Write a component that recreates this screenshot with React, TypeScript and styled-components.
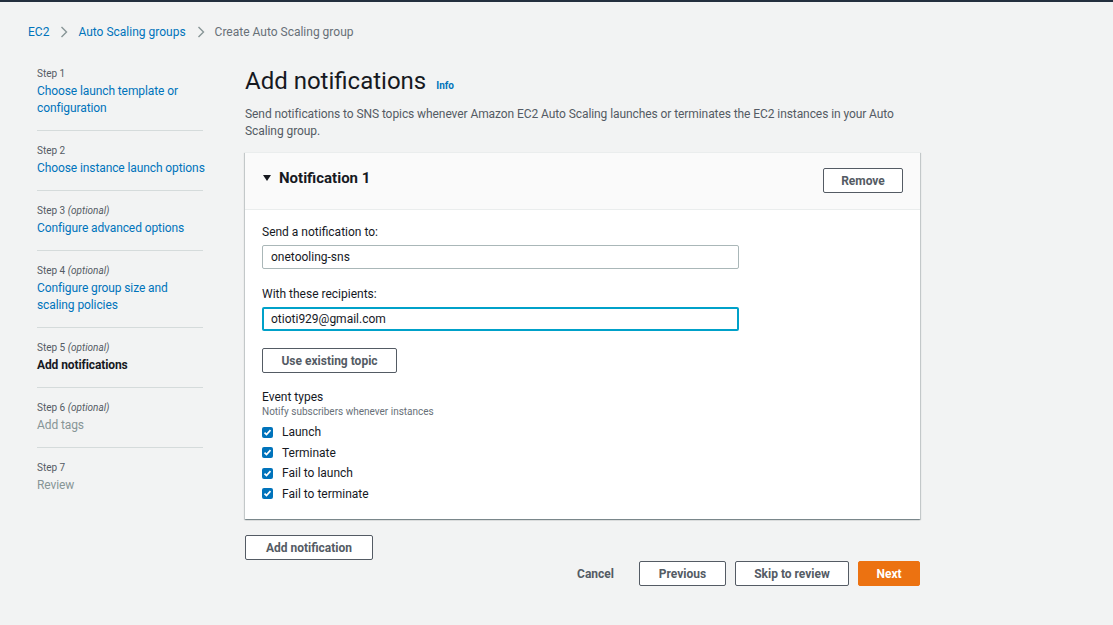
import React from "react";
import styled, { createGlobalStyle } from "styled-components";

const Global = createGlobalStyle`
  html, body { margin: 0; padding: 0; }
  body {
    background: #f2f3f3;
    font-family: Roboto, "Open Sans", sans-serif;
    color: #16191f;
  }
  * { box-sizing: border-box; }
`;

const Page = styled.div`
  border-top: 2px solid #232f3e;
  min-height: 625px;
  background: #f2f3f3;
`;

const Breadcrumbs = styled.nav`
  display: flex;
  align-items: center;
  height: 60px;
  padding: 0 0 0 28px;
  font-size: 12px;
`;

const Crumb = styled.span<{ $current?: boolean }>`
  color: ${(p) => (p.$current ? "#687078" : "#0073bb")};
`;

const Sep = styled.span`
  display: inline-flex;
  margin: 0 10px 0 11px;
  color: #879596;
`;

const Body = styled.div`
  display: flex;
  gap: 42px;
  padding-left: 37px;
`;

const Side = styled.aside`
  width: 166px;
  padding-top: 5px;
`;

const StepItem = styled.div<{ $last?: boolean }>`
  padding: 0 0 ${(p) => (p.$last ? "0" : "13px")};
  margin-bottom: 13px;
  border-bottom: ${(p) => (p.$last ? "none" : "1px solid #d5dbdb")};
`;

const StepLabel = styled.div`
  font-size: 10px;
  color: #545b64;
  line-height: 14px;
  margin-bottom: 2px;
  i { font-style: italic; }
`;

const StepTitle = styled.div<{ $state: "link" | "active" | "disabled" }>`
  font-size: 12px;
  line-height: 17px;
  white-space: nowrap;
  letter-spacing: -0.1px;
  color: ${(p) =>
    p.$state === "link" ? "#0073bb" : p.$state === "active" ? "#16191f" : "#879596"};
  font-weight: ${(p) => (p.$state === "active" ? 700 : 400)};
`;

const Main = styled.main`
  width: 675px;
  padding-top: 4px;
`;

const TitleRow = styled.div`
  display: flex;
  align-items: baseline;
  gap: 10px;
`;

const H1 = styled.h1`
  margin: 0;
  font-size: 24px;
  font-weight: 400;
  line-height: 30px;
  color: #16191f;
`;

const Info = styled.span`
  font-size: 10px;
  font-weight: 700;
  color: #0073bb;
`;

const Desc = styled.p`
  margin: 10px 0 12px;
  font-size: 12px;
  line-height: 17px;
  letter-spacing: -0.08px;
  color: #545b64;
`;

const Card = styled.section`
  background: #fff;
  border-top: 1px solid #eaeded;
  box-shadow: 0 1px 1px 0 rgba(0, 28, 36, 0.3), 1px 1px 1px 0 rgba(0, 28, 36, 0.15),
    -1px 1px 1px 0 rgba(0, 28, 36, 0.15);
`;

const CardHeader = styled.div`
  display: flex;
  justify-content: space-between;
  align-items: flex-start;
  background: #fafafa;
  border-bottom: 1px solid #eaeded;
  height: 57px;
  padding: 15px 17px 0 17px;
`;

const HeaderTitle = styled.h2`
  margin: 0;
  display: flex;
  align-items: center;
  gap: 8px;
  font-size: 15px;
  font-weight: 700;
  line-height: 18px;
  padding-top: 1px;
`;

const Caret = styled.span`
  width: 0;
  height: 0;
  border-left: 4.5px solid transparent;
  border-right: 4.5px solid transparent;
  border-top: 6px solid #16191f;
  margin-left: 1px;
`;

const Button = styled.button<{ $primary?: boolean; $w?: number }>`
  font-family: inherit;
  font-size: 12px;
  font-weight: 700;
  height: 25px;
  padding: 0 16px;
  border-radius: 2px;
  cursor: pointer;
  border: 1px solid ${(p) => (p.$primary ? "#ec7211" : "#545b64")};
  background: ${(p) => (p.$primary ? "#ec7211" : "#fff")};
  color: ${(p) => (p.$primary ? "#fff" : "#545b64")};
  width: ${(p) => (p.$w ? `${p.$w}px` : "auto")};
`;

const LinkButton = styled.button`
  font-family: inherit;
  font-size: 12px;
  font-weight: 700;
  color: #545b64;
  background: none;
  border: none;
  height: 25px;
  padding: 0 16px;
`;

const CardBody = styled.div`
  padding: 14px 17px 15px;
`;

const Field = styled.div`
  margin-bottom: 17px;
`;

const Label = styled.label`
  display: block;
  font-size: 12px;
  line-height: 16px;
  color: #16191f;
  margin-bottom: 5px;
`;

const Input = styled.input<{ $focus?: boolean }>`
  display: block;
  width: 477px;
  height: 24px;
  font-family: inherit;
  font-size: 12px;
  color: #16191f;
  padding: 0 8px;
  border-radius: 2px;
  border: ${(p) => (p.$focus ? "2px solid #00a1c9" : "1px solid #aab7b8")};
  padding-left: ${(p) => (p.$focus ? "7px" : "8px")};
  outline: none;
`;

const EventTitle = styled.div`
  margin-top: 17px;
  font-size: 12px;
  line-height: 15px;
`;

const EventHint = styled.div`
  font-size: 10px;
  line-height: 13px;
  color: #687078;
  margin-bottom: 4px;
`;

const CheckRow = styled.div`
  display: flex;
  align-items: center;
  gap: 9px;
  height: 20.5px;
  font-size: 12px;
`;

const Box = styled.span`
  width: 11px;
  height: 11px;
  border-radius: 2px;
  background: #0073bb;
  display: inline-flex;
  align-items: center;
  justify-content: center;
`;

const BelowCard = styled.div`
  padding-top: 16px;
`;

const Footer = styled.div`
  display: flex;
  justify-content: flex-end;
  align-items: center;
  gap: 9px;
  margin-top: 1px;
`;

const Chevron = () => (
  <svg width="8" height="12" viewBox="0 0 8 12">
    <path d="M1.5 1l5 5-5 5" fill="none" stroke="#879596" strokeWidth="1.4" />
  </svg>
);

const Check = () => (
  <Box>
    <svg width="9" height="9" viewBox="0 0 9 9">
      <path d="M1.5 4.6l2 2 4-4.5" fill="none" stroke="#fff" strokeWidth="1.7" />
    </svg>
  </Box>
);

const steps: { label: string; optional?: boolean; title: string[]; state: "link" | "active" | "disabled" }[] = [
  { label: "Step 1", title: ["Choose launch template or", "configuration"], state: "link" },
  { label: "Step 2", title: ["Choose instance launch options"], state: "link" },
  { label: "Step 3", optional: true, title: ["Configure advanced options"], state: "link" },
  { label: "Step 4", optional: true, title: ["Configure group size and", "scaling policies"], state: "link" },
  { label: "Step 5", optional: true, title: ["Add notifications"], state: "active" },
  { label: "Step 6", optional: true, title: ["Add tags"], state: "disabled" },
  { label: "Step 7", title: ["Review"], state: "disabled" },
];

const events = ["Launch", "Terminate", "Fail to launch", "Fail to terminate"];

export default function App() {
  return (
    <Page>
      <Global />
      <Breadcrumbs>
        <Crumb>EC2</Crumb>
        <Sep><Chevron /></Sep>
        <Crumb>Auto Scaling groups</Crumb>
        <Sep><Chevron /></Sep>
        <Crumb $current>Create Auto Scaling group</Crumb>
      </Breadcrumbs>
      <Body>
        <Side>
          {steps.map((s, i) => (
            <StepItem key={s.label} $last={i === steps.length - 1}>
              <StepLabel>
                {s.label} {s.optional && <i>(optional)</i>}
              </StepLabel>
              <StepTitle $state={s.state}>
                {s.title.map((t) => (
                  <div key={t}>{t}</div>
                ))}
              </StepTitle>
            </StepItem>
          ))}
        </Side>
        <Main>
          <TitleRow>
            <H1>Add notifications</H1>
            <Info>Info</Info>
          </TitleRow>
          <Desc>
            Send notifications to SNS topics whenever Amazon EC2 Auto Scaling launches or terminates the EC2
            instances in your Auto Scaling group.
          </Desc>
          <Card>
            <CardHeader>
              <HeaderTitle>
                <Caret />
                Notification 1
              </HeaderTitle>
              <Button $w={80}>Remove</Button>
            </CardHeader>
            <CardBody>
              <Field>
                <Label>Send a notification to:</Label>
                <Input defaultValue="onetooling-sns" readOnly />
              </Field>
              <Field>
                <Label>With these recipients:</Label>
                <Input $focus defaultValue="otioti929@gmail.com" readOnly />
              </Field>
              <Button $w={135}>Use existing topic</Button>
              <EventTitle>Event types</EventTitle>
              <EventHint>Notify subscribers whenever instances</EventHint>
              {events.map((e) => (
                <CheckRow key={e}>
                  <Check />
                  {e}
                </CheckRow>
              ))}
            </CardBody>
          </Card>
          <BelowCard>
            <Button $w={128}>Add notification</Button>
            <Footer>
              <LinkButton>Cancel</LinkButton>
              <Button $w={87}>Previous</Button>
              <Button $w={114}>Skip to review</Button>
              <Button $primary $w={62}>Next</Button>
            </Footer>
          </BelowCard>
        </Main>
      </Body>
    </Page>
  );
}
